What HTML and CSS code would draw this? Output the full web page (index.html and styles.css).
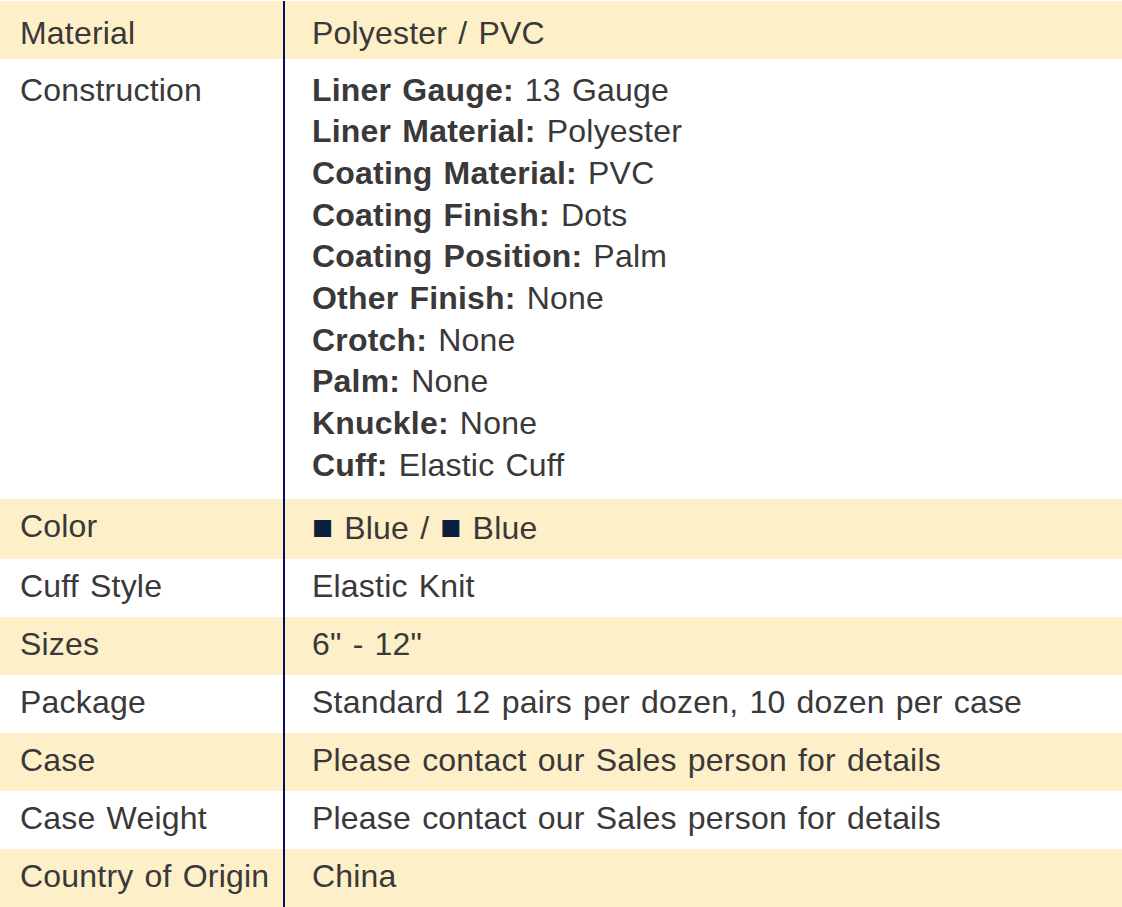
FILE: index.html
```html
<!DOCTYPE html>
<html lang="en">
<head>
<meta charset="utf-8">
<title>Specifications</title>
<link rel="stylesheet" href="styles.css">
</head>
<body>
<div class="spec-table">
  <div class="row alt first"><div class="label">Material</div><div class="value">Polyester / PVC</div></div>
  <div class="row tall"><div class="label">Construction</div><div class="value">
    <div><b>Liner Gauge:</b> 13 Gauge</div>
    <div><b>Liner Material:</b> Polyester</div>
    <div><b>Coating Material:</b> PVC</div>
    <div><b>Coating Finish:</b> Dots</div>
    <div><b>Coating Position:</b> Palm</div>
    <div><b>Other Finish:</b> None</div>
    <div><b>Crotch:</b> None</div>
    <div><b>Palm:</b> None</div>
    <div><b>Knuckle:</b> None</div>
    <div><b>Cuff:</b> Elastic Cuff</div>
  </div></div>
  <div class="row alt"><div class="label">Color</div><div class="value"><span class="swatch">■</span> Blue / <span class="swatch">■</span> Blue</div></div>
  <div class="row"><div class="label">Cuff Style</div><div class="value">Elastic Knit</div></div>
  <div class="row alt"><div class="label">Sizes</div><div class="value">6" - 12"</div></div>
  <div class="row"><div class="label">Package</div><div class="value">Standard 12 pairs per dozen, 10 dozen per case</div></div>
  <div class="row alt"><div class="label">Case</div><div class="value">Please contact our Sales person for details</div></div>
  <div class="row"><div class="label">Case Weight</div><div class="value">Please contact our Sales person for details</div></div>
  <div class="row alt"><div class="label">Country of Origin</div><div class="value">China</div></div>
</div>
</body>
</html>
```
FILE: styles.css
```css
html, body {
  margin: 0;
  padding: 0;
  background: #ffffff;
}
body {
  font-family: "Liberation Sans", Arial, sans-serif;
  font-size: 32px;
  line-height: 41.67px;
  letter-spacing: 0.2px;
  word-spacing: 2px;
  color: #3a3838;
}
.spec-table {
  padding-top: 1px;
  width: 1122px;
}
.row {
  display: grid;
  grid-template-columns: 283px 1fr;
  background: #ffffff;
}
.row.alt {
  background: #fdf0c8;
}
.label {
  padding: 7.5px 0 8.9px 20px;
  white-space: nowrap;
}
.value {
  border-left: 2px solid #0c0c5c;
  padding: 7.5px 0 8.9px 27px;
  white-space: nowrap;
}
.row.first .label,
.row.first .value {
  padding-top: 12px;
  padding-bottom: 4.4px;
}
.row.tall .label,
.row.tall .value {
  padding-top: 10.5px;
  padding-bottom: 12.3px;
}
.value b {
  font-weight: 700;
}
.swatch {
  color: #0b1e40;
  font-size: 35px;
  letter-spacing: 0;
  word-spacing: -2px;
}
```
